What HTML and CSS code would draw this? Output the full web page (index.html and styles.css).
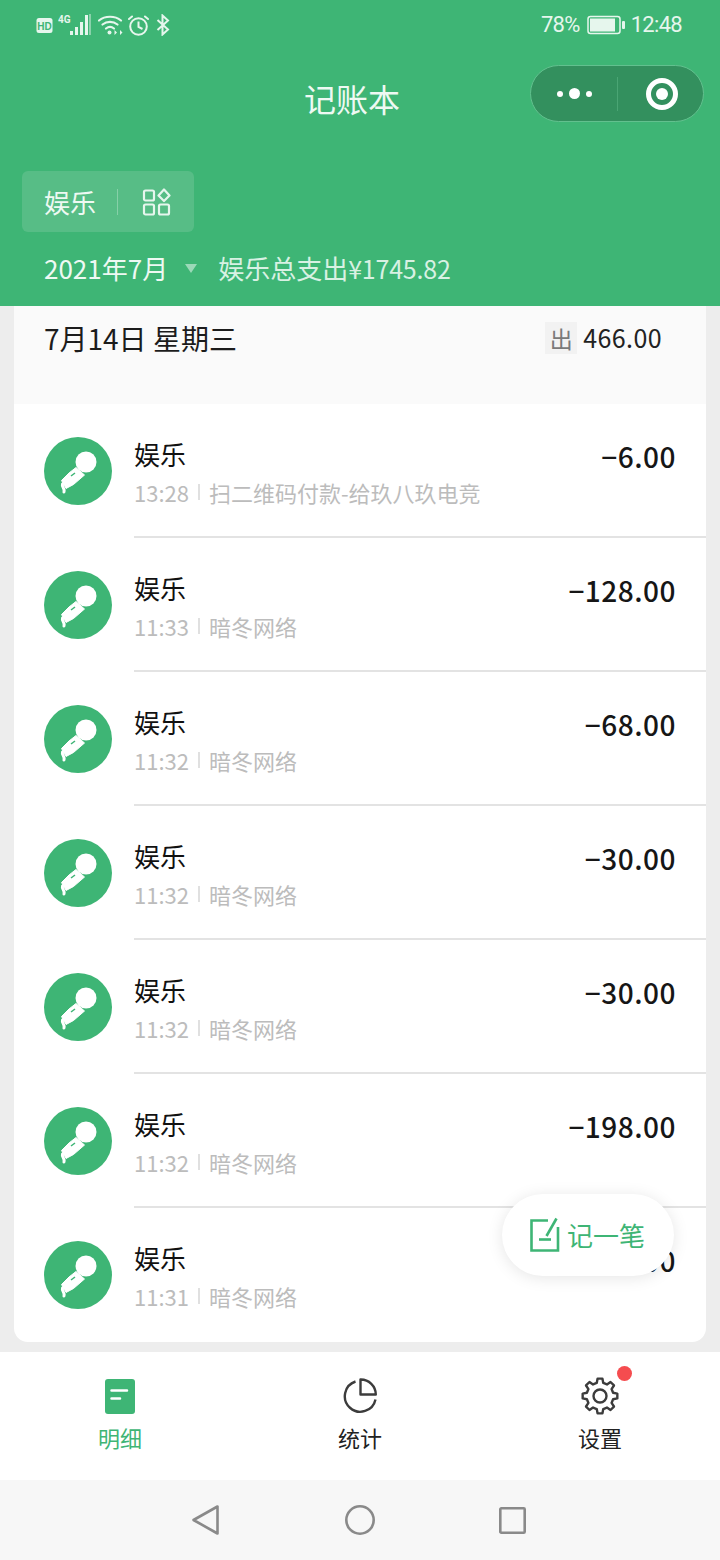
FILE: index.html
```html
<!DOCTYPE html>
<html lang="zh-CN">
<head>
<meta charset="utf-8">
<title>记账本</title>
<link rel="stylesheet" href="styles.css">
</head>
<body>
<div class="app">
  <svg width="0" height="0" class="defs">
    <symbol id="mic" viewBox="0 0 68 68">
      <circle cx="42" cy="25" r="10.500" fill="#fff"/>
      <path d="M32 30.500 40.500 38 29.500 47.500 22 51.500 17.500 43.500 25 36Z" fill="#fff" stroke="#fff" stroke-linejoin="round"/>
      <path d="M27 39 31 36" stroke="#3eb575" stroke-width="1.500" fill="none"/>
      <path d="M18.500 47C17.500 50 21 51 20 55" stroke="#fff" stroke-width="3" stroke-linecap="round" fill="none"/>
    </symbol>
  </svg>

  <header class="header">
    <div class="status">
      <div class="status-left">
        <svg class="st-hd" width="17" height="17" viewBox="0 0 17 17"><rect x="0.500" y="1" width="16" height="15" rx="2.500" fill="#e6f6ed"/><text x="8.500" y="12.500" class="hd-text">HD</text></svg>
        <svg class="st-sig" width="33" height="22" viewBox="0 0 33 22">
          <text x="0" y="9" class="sig-text">4G</text>
          <rect x="12" y="17" width="3" height="4" fill="#e6f6ed"/>
          <rect x="17" y="13" width="3" height="8" fill="#e6f6ed"/>
          <rect x="22" y="8" width="3" height="13" fill="#e6f6ed"/>
          <rect x="27" y="1" width="3" height="20" fill="#e6f6ed"/>
          <rect x="31" y="0" width="2" height="21" fill="#e6f6ed" opacity=".45"/>
        </svg>
        <svg class="st-wifi" width="25" height="21" viewBox="0 0 25 21" fill="none" stroke="#e6f6ed" stroke-width="2.200" stroke-linecap="round">
          <path d="M1 5.500C7 .5 17 .5 23 5.500"/><path d="M4.500 9.500C9 6 15 6 19.500 9.500"/><path d="M8 13.500C10.500 11.500 13.500 11.500 16 13.500"/>
          <circle cx="11.500" cy="17.500" r="2" fill="#e6f6ed" stroke="none"/>
          <path d="M16.500 15 19 17.500 16.500 20Z M22 15 24.500 17.500 22 20Z" fill="#e6f6ed" stroke="none"/>
        </svg>
        <svg class="st-clock" width="21" height="21" viewBox="0 0 21 21" fill="none" stroke="#e6f6ed" stroke-width="2">
          <circle cx="10.500" cy="11.500" r="8.300"/><path d="M10.500 6.500V12L14.500 14"/><path d="M1 4 4 1.500M20 4 17 1.500" stroke-linecap="round"/>
        </svg>
        <svg class="st-bt" width="14" height="22" viewBox="0 0 14 22" fill="none" stroke="#e6f6ed" stroke-width="2">
          <path d="M1.500 6 12 15.500 6.500 20.500V1.500L12 6.500 1.500 16"/>
        </svg>
      </div>
      <div class="status-right">
        <span class="st-text">78%</span>
        <svg class="st-batt" width="38" height="20" viewBox="0 0 38 20"><rect x="1" y="1.500" width="32" height="17" rx="2.500" fill="none" stroke="#e6f6ed" stroke-width="1.500"/><rect x="3" y="3.500" width="25" height="13" fill="#e6f6ed"/><rect x="35" y="6" width="3" height="8" rx="1" fill="#e6f6ed"/></svg>
        <span class="st-text">12:48</span>
      </div>
    </div>

    <div class="titlebar">
      <h1 class="title">记账本</h1>
      <div class="capsule">
        <div class="cap-more"><i class="dot"></i><i class="dot dot-big"></i><i class="dot"></i></div>
        <div class="cap-sep"></div>
        <div class="cap-target"><i class="target-in"></i></div>
      </div>
    </div>

    <div class="chip">
      <span class="chip-text">娱乐</span>
      <span class="chip-sep"></span>
      <svg width="30" height="28" viewBox="0 0 30 28" fill="none" stroke="#e6f6ed" stroke-width="2.200">
        <rect x="2" y="2.500" width="10" height="10" rx="1.500"/>
        <rect x="2" y="16.500" width="10" height="10" rx="1.500"/>
        <rect x="17" y="16.500" width="10" height="10" rx="1.500"/>
        <path d="M22 1.500 27.500 7.500 22 13 16.500 7.500Z" stroke-linejoin="round"/>
      </svg>
    </div>

    <div class="summary">
      <span class="month">2021年7月</span>
      <span class="caret"></span>
      <span class="total">娱乐总支出<span class="total-num">¥1745.82</span></span>
    </div>
  </header>

  <main class="main">
    <section class="card">
      <div class="day">
        <span class="day-date">7月14日 星期三</span>
        <span class="day-out"><span class="out-tag">出</span><span class="out-num">466.00</span></span>
      </div>
      <ul class="list">
        <li class="row">
          <svg class="avatar" viewBox="0 0 68 68"><circle cx="34" cy="34" r="34" fill="#3eb575"/><use href="#mic"/></svg>
          <div class="row-body"><div class="row-text"><div class="row-name">娱乐</div><div class="row-meta"><span>13:28</span><i class="meta-sep"></i><span>扫二维码付款-给玖八玖电竞</span></div></div><div class="row-amt">−6.00</div></div>
        </li>
        <li class="row">
          <svg class="avatar" viewBox="0 0 68 68"><circle cx="34" cy="34" r="34" fill="#3eb575"/><use href="#mic"/></svg>
          <div class="row-body"><div class="row-text"><div class="row-name">娱乐</div><div class="row-meta"><span>11:33</span><i class="meta-sep"></i><span>暗冬网络</span></div></div><div class="row-amt">−128.00</div></div>
        </li>
        <li class="row">
          <svg class="avatar" viewBox="0 0 68 68"><circle cx="34" cy="34" r="34" fill="#3eb575"/><use href="#mic"/></svg>
          <div class="row-body"><div class="row-text"><div class="row-name">娱乐</div><div class="row-meta"><span>11:32</span><i class="meta-sep"></i><span>暗冬网络</span></div></div><div class="row-amt">−68.00</div></div>
        </li>
        <li class="row">
          <svg class="avatar" viewBox="0 0 68 68"><circle cx="34" cy="34" r="34" fill="#3eb575"/><use href="#mic"/></svg>
          <div class="row-body"><div class="row-text"><div class="row-name">娱乐</div><div class="row-meta"><span>11:32</span><i class="meta-sep"></i><span>暗冬网络</span></div></div><div class="row-amt">−30.00</div></div>
        </li>
        <li class="row">
          <svg class="avatar" viewBox="0 0 68 68"><circle cx="34" cy="34" r="34" fill="#3eb575"/><use href="#mic"/></svg>
          <div class="row-body"><div class="row-text"><div class="row-name">娱乐</div><div class="row-meta"><span>11:32</span><i class="meta-sep"></i><span>暗冬网络</span></div></div><div class="row-amt">−30.00</div></div>
        </li>
        <li class="row">
          <svg class="avatar" viewBox="0 0 68 68"><circle cx="34" cy="34" r="34" fill="#3eb575"/><use href="#mic"/></svg>
          <div class="row-body"><div class="row-text"><div class="row-name">娱乐</div><div class="row-meta"><span>11:32</span><i class="meta-sep"></i><span>暗冬网络</span></div></div><div class="row-amt">−198.00</div></div>
        </li>
        <li class="row">
          <svg class="avatar" viewBox="0 0 68 68"><circle cx="34" cy="34" r="34" fill="#3eb575"/><use href="#mic"/></svg>
          <div class="row-body"><div class="row-text"><div class="row-name">娱乐</div><div class="row-meta"><span>11:31</span><i class="meta-sep"></i><span>暗冬网络</span></div></div><div class="row-amt">−90.00</div></div>
        </li>
      </ul>
    </section>
    <div class="fab">
      <svg width="32" height="36" viewBox="0 0 32 36" fill="none" stroke="#3eb575" stroke-width="2.600">
        <path d="M19 3.500H2.500V33.500H29V10"/><path d="M27.500 1.500 17.500 19"/><path d="M10 22.500H22"/>
      </svg>
      <span class="fab-text">记一笔</span>
    </div>
  </main>

  <nav class="tabbar">
    <div class="tab tab-on">
      <svg width="32" height="36" viewBox="0 0 32 36"><rect x="1" y="1" width="30" height="35" rx="3" fill="#3eb575"/><path d="M7.500 12.500H23M7.500 20.500H16" stroke="#fff" stroke-width="2.500" stroke-linecap="round"/></svg>
      <span class="tab-label">明细</span>
    </div>
    <div class="tab">
      <svg width="36" height="36" viewBox="0 0 36 36" fill="none" stroke="#3c3c3c" stroke-width="2.400"><path d="M13.500 3.500A15.500 15.500 0 1 0 33.500 21.500"/><path d="M18.500 1.500A15 15 0 0 1 33.800 16.500H18.500Z" stroke-linejoin="round"/></svg>
      <span class="tab-label">统计</span>
    </div>
    <div class="tab">
      <svg class="tab-gear" width="38" height="38" viewBox="0 0 38 38" fill="none" stroke="#3c3c3c" stroke-width="2.400" stroke-linejoin="round">
        <path d="M15.730 5.900 16.560 1.670H21.440L22.270 5.900 25.950 7.430 29.530 5.020 32.980 8.470 30.570 12.050 32.100 15.730 36.330 16.560V21.440L32.100 22.270 30.570 25.950 32.980 29.530 29.530 32.980 25.950 30.570 22.270 32.100 21.440 36.330H16.560L15.730 32.100 12.050 30.570 8.470 32.980 5.020 29.530 7.430 25.950 5.900 22.270 1.670 21.440V16.560L5.900 15.730 7.430 12.050 5.020 8.470 8.470 5.020 12.050 7.430Z"/>
        <circle cx="19" cy="19" r="6.500"/>
      </svg>
      <span class="tab-label">设置</span>
      <i class="badge"></i>
    </div>
  </nav>

  <footer class="sysnav">
    <svg class="nav-back" width="27" height="30" viewBox="0 0 27 30" fill="none" stroke="#8a8a8a" stroke-width="2.600" stroke-linejoin="round"><path d="M25.500 1.500V28.500L1.500 15Z"/></svg>
    <svg class="nav-home" width="30" height="30" viewBox="0 0 30 30" fill="none" stroke="#8a8a8a" stroke-width="2.600"><circle cx="15" cy="15" r="13.700"/></svg>
    <svg class="nav-task" width="27" height="27" viewBox="0 0 27 27" fill="none" stroke="#8a8a8a" stroke-width="2.600" stroke-linejoin="round"><rect x="1.300" y="1.300" width="24.400" height="24.400" rx="1"/></svg>
  </footer>
</div>
</body>
</html>
```

FILE: styles.css
```css
* { box-sizing: border-box; }
html, body { margin: 0; padding: 0; }
body {
  font-family: "Noto Sans CJK SC", "Noto Sans", sans-serif;
  background: #ededed;
}
.defs { position: absolute; }
.app {
  width: 720px;
  height: 1560px;
  display: flex;
  flex-direction: column;
  overflow: hidden;
}
.header {
  height: 306px;
  flex: none;
  background: #3eb575;
  color: #eef9f3;
  padding: 0;
}
.status {
  height: 50px;
  padding: 0 38px 0 36px;
  display: flex;
  justify-content: space-between;
  align-items: center;
}
.status-left, .status-right { display: flex; align-items: center; }
.status-left { gap: 5px; }
.st-hd { margin-top: 1px; }
.st-wifi, .st-bt { margin-left: 2px; }
.hd-text { font: 700 10px "Liberation Sans", sans-serif; fill: #3eb575; text-anchor: middle; }
.sig-text { font: 700 10px "Roboto", sans-serif; fill: #e6f6ed; }
.st-text { font: 400 22px/1 "Roboto", sans-serif; letter-spacing: -.7px; color: #e6f6ed; }
.st-batt { margin: 0 6px 0 7px; }
.titlebar {
  height: 100px;
  position: relative;
  display: flex;
  justify-content: center;
  padding-right: 16px;
}
.title {
  margin: 23px 0 0;
  font-size: 32px;
  line-height: 50px;
  font-weight: 400;
}
.capsule {
  position: absolute;
  left: 530px;
  top: 15px;
  width: 174px;
  height: 57px;
  border-radius: 29px;
  background: #33905e;
  border: 1px solid #62c08e;
  display: flex;
  align-items: center;
}
.cap-more { width: 86px; display: flex; justify-content: center; align-items: center; gap: 6px; }
.dot { width: 6px; height: 6px; border-radius: 50%; background: #fff; }
.dot-big { width: 11px; height: 11px; }
.cap-sep { width: 1px; height: 34px; background: #4aa574; }
.cap-target {
  width: 32px;
  height: 32px;
  margin-left: 28px;
  border: 5px solid #fff;
  border-radius: 50%;
  display: flex;
  align-items: center;
  justify-content: center;
}
.target-in { width: 12px; height: 12px; border-radius: 50%; background: #fff; }
.chip {
  margin: 21px 0 0 22px;
  width: 172px;
  height: 61px;
  border-radius: 6px;
  background: #57bd86;
  display: flex;
  align-items: center;
  padding-left: 22px;
}
.chip-text { font-size: 26px; line-height: 1; }
.chip-sep { width: 1px; height: 26px; background: #86d0a8; margin: 0 24px 0 21px; }
.summary {
  display: flex;
  align-items: center;
  height: 40px;
  margin-top: 16px;
  padding-left: 44px;
}
.month { font-size: 26px; line-height: 40px; }
.caret {
  width: 0;
  height: 0;
  margin: 1px 21px 0 17px;
  border: 6.500px solid transparent;
  border-top: 9px solid #9bd9b8;
  border-bottom: 0;
}
.total { font-size: 26px; line-height: 40px; color: #d8f1e3; }
.total-num { font-size: 25px; letter-spacing: -.2px; }
.main {
  flex: 1;
  position: relative;
  padding: 0 14px;
  overflow: hidden;
}
.card {
  background: #fff;
  border-radius: 0 0 14px 14px;
  height: 1036px;
  overflow: hidden;
}
.day {
  height: 98px;
  background: #fafafa;
  display: flex;
  justify-content: space-between;
  padding: 12px 44px 0 30px;
}
.day-date { font-size: 28px; line-height: 40px; color: #1c1c1c; }
.day-out { display: flex; align-items: flex-start; padding-top: 4px; }
.out-tag {
  width: 32px;
  height: 32px;
  background: #f2f2f2;
  color: #7a7a7a;
  font-size: 23px;
  line-height: 32px;
  text-align: center;
  margin-right: 6px;
}
.out-num { font-size: 25px; line-height: 30px; letter-spacing: .4px; color: #222; }
.list { list-style: none; margin: 0; padding: 0; }
.row {
  height: 134px;
  display: flex;
  align-items: flex-start;
  padding: 33px 0 0 30px;
}
.avatar { width: 68px; height: 68px; flex: none; }
.row-body {
  flex: 1;
  margin-left: 22px;
  height: 134px;
  margin-top: -33px;
  padding: 28px 30px 0 0;
  border-bottom: 2px solid #e3e3e3;
  display: flex;
  justify-content: space-between;
  align-items: flex-start;
}
.row:last-child .row-body { border-bottom: 0; }
.row-name { font-size: 26px; line-height: 44px; color: #111; }
.row-meta {
  display: flex;
  align-items: center;
  font-size: 22px;
  line-height: 32px;
  color: #bcbcbc;
}
.meta-sep { width: 2px; height: 16px; margin: 0 9px; background: #e0e0e0; }
.row-amt {
  font-size: 28px;
  line-height: 48px;
  font-weight: 500;
  color: #161616;
  letter-spacing: .5px;
}
.fab {
  position: absolute;
  left: 502px;
  top: 888px;
  width: 172px;
  height: 82px;
  border-radius: 41px;
  background: #fff;
  box-shadow: 0 2px 16px rgba(0,0,0,.1);
  display: flex;
  align-items: center;
  padding-left: 27px;
  gap: 6px;
}
.fab-text { font-size: 26px; color: #3eb575; line-height: 1; }
.tabbar {
  height: 128px;
  flex: none;
  background: #fff;
  display: grid;
  grid-template-columns: 240px 240px 240px;
}
.tab {
  position: relative;
  display: flex;
  flex-direction: column;
  align-items: center;
  padding-top: 26px;
}
.tab-gear { margin: -1px 0; }
.tab-label { font-size: 22px; line-height: 30px; margin-top: 8px; color: #222; }
.tab-on .tab-label { color: #3eb575; }
.badge {
  position: absolute;
  left: 137px;
  top: 14px;
  width: 15px;
  height: 15px;
  border-radius: 50%;
  background: #f54c4f;
}
.sysnav {
  height: 80px;
  flex: none;
  background: #f7f7f7;
  display: flex;
  align-items: center;
  padding-left: 192px;
}
.nav-home { margin-left: 126px; }
.nav-task { margin-left: 124px; }
```
